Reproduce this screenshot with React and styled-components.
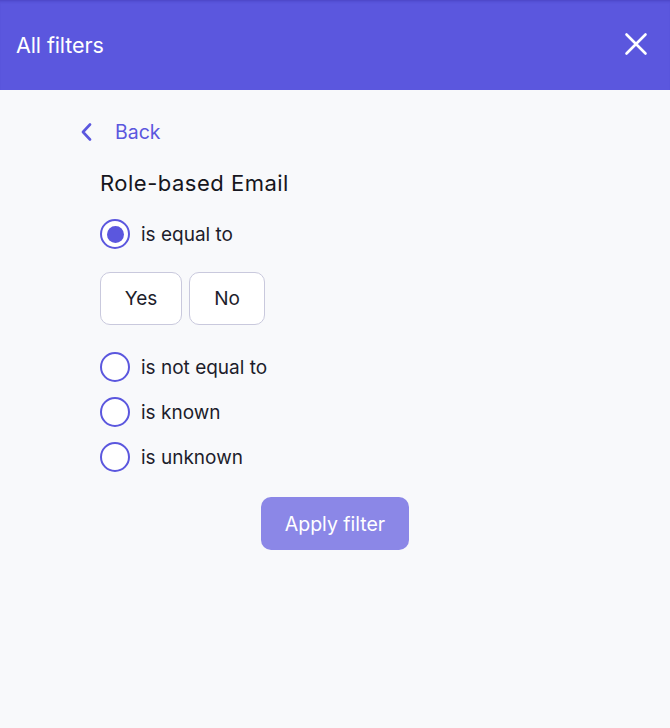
import React, { useState } from "react";
import styled, { createGlobalStyle } from "styled-components";

const Global = createGlobalStyle`
  html, body { margin: 0; padding: 0; background: #f8f9fb; }
  body { font-family: "Inter", "Lato", sans-serif; }
  * { box-sizing: border-box; }
`;

const Page = styled.div`
  width: 670px;
  min-height: 728px;
  background: #f8f9fb;
  display: flex;
  flex-direction: column;
`;

const Header = styled.header`
  height: 90px;
  background: #5b57de;
  display: flex;
  align-items: center;
  justify-content: space-between;
  padding: 0 21px 0 16px;
  box-shadow: inset 0 3px 3px -2px rgba(40, 30, 140, 0.35);
`;

const Title = styled.h1`
  margin: 0;
  font-size: 21.5px;
  font-weight: 400;
  color: #fff;
  letter-spacing: -0.1px;
`;

const CloseButton = styled.button`
  border: 0;
  background: transparent;
  padding: 0;
  width: 26px;
  height: 26px;
  display: flex;
  align-items: center;
  justify-content: center;
  cursor: pointer;
  transform: translateY(-1px);
`;

const Body = styled.main`
  padding: 30px 0 0 80px;
  display: flex;
  flex-direction: column;
`;

const BackLink = styled.button`
  border: 0;
  background: transparent;
  padding: 0;
  display: flex;
  align-items: center;
  gap: 21px;
  color: #5b57de;
  font-family: inherit;
  font-size: 19.5px;
  height: 24px;
  cursor: pointer;
  align-self: flex-start;
`;

const Content = styled.div`
  padding-left: 20px;
  margin-top: 25px;
  display: flex;
  flex-direction: column;
`;

const FieldName = styled.h2`
  margin: 0;
  font-size: 22px;
  font-weight: 400;
  color: #161620;
  line-height: 28px;
  letter-spacing: 0.5px;
`;

const Option = styled.label`
  display: flex;
  align-items: center;
  gap: 11px;
  height: 30px;
  margin-top: ${(p) => p.$mt}px;
  font-size: 19px;
  color: #1d1d2b;
  cursor: pointer;
`;

const Circle = styled.span`
  width: 30px;
  height: 30px;
  border-radius: 50%;
  border: 2.5px solid #5b57de;
  background: #fff;
  display: flex;
  align-items: center;
  justify-content: center;
  flex-shrink: 0;
  &::after {
    content: "";
    width: 17px;
    height: 17px;
    border-radius: 50%;
    background: #5b57de;
    display: ${(p) => (p.$checked ? "block" : "none")};
  }
`;

const ChoiceRow = styled.div`
  display: flex;
  gap: 7px;
  margin-top: 23px;
`;

const Choice = styled.button`
  width: ${(p) => p.$w}px;
  height: 53px;
  border: 1px solid #c9c9dd;
  border-radius: 10px;
  background: #fff;
  font-family: inherit;
  font-size: 19px;
  color: #1d1d2b;
  cursor: pointer;
`;

const ApplyRow = styled.div`
  display: flex;
  justify-content: center;
  padding-right: 100px;
  margin-top: 25px;
`;

const ApplyButton = styled.button`
  width: 148px;
  height: 53px;
  border: 0;
  border-radius: 10px;
  background: #8b87e7;
  color: #fff;
  font-family: inherit;
  font-size: 19.5px;
  cursor: pointer;
`;

const options = ["is equal to", "is not equal to", "is known", "is unknown"];

export default function App() {
  const [sel, setSel] = useState(0);
  return (
    <Page>
      <Global />
      <Header>
        <Title>All filters</Title>
        <CloseButton aria-label="Close">
          <svg width="24" height="24" viewBox="0 0 24 24" fill="none">
            <path d="M2.5 2.5 L21.5 21.5 M21.5 2.5 L2.5 21.5" stroke="#fff" strokeWidth="2.6" strokeLinecap="round" />
          </svg>
        </CloseButton>
      </Header>
      <Body>
        <BackLink>
          <svg width="14" height="18" viewBox="0 0 14 18" fill="none">
            <path d="M10 1.5 L3 9 L10 16.5" stroke="#5b57de" strokeWidth="2.6" strokeLinecap="round" strokeLinejoin="round" />
          </svg>
          Back
        </BackLink>
        <Content>
          <FieldName>Role-based Email</FieldName>
          <Option $mt={22} onClick={() => setSel(0)}>
            <Circle $checked={sel === 0} />
            {options[0]}
          </Option>
          {sel === 0 && (
            <ChoiceRow>
              <Choice $w={82}>Yes</Choice>
              <Choice $w={76}>No</Choice>
            </ChoiceRow>
          )}
          {options.slice(1).map((o, i) => (
            <Option key={o} $mt={i === 0 ? 27 : 15} onClick={() => setSel(i + 1)}>
              <Circle $checked={sel === i + 1} />
              {o}
            </Option>
          ))}
          <ApplyRow>
            <ApplyButton>Apply filter</ApplyButton>
          </ApplyRow>
        </Content>
      </Body>
    </Page>
  );
}
